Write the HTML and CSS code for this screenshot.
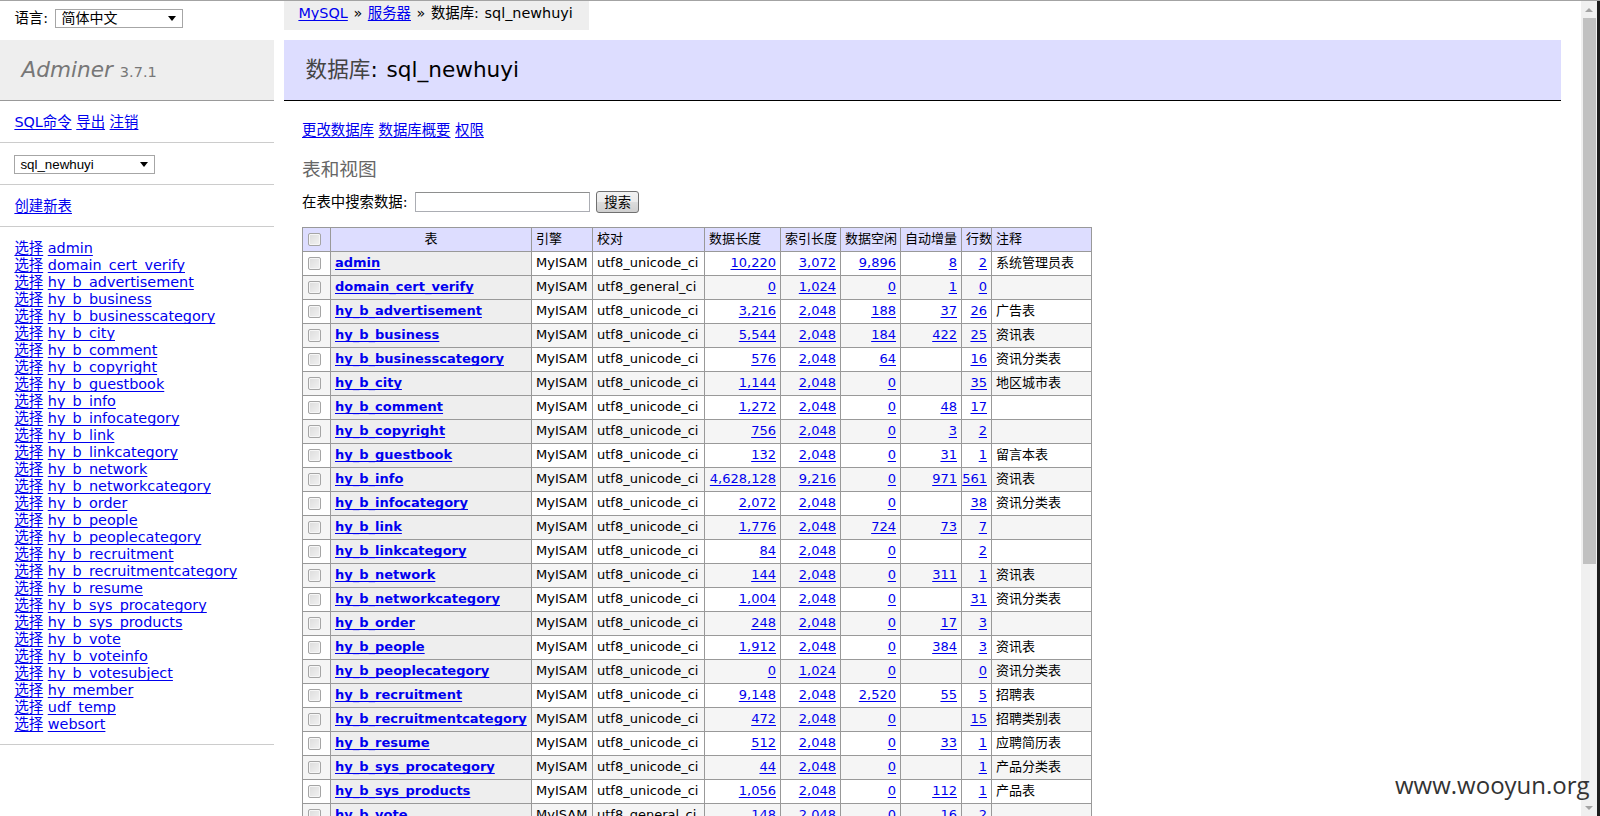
FILE: index.html
```html
<!DOCTYPE html>
<html lang="zh-CN">
<head>
<meta charset="utf-8">
<title>数据库: sql_newhuyi - Adminer</title>
<link rel="stylesheet" href="styles.css">
</head>
<body>
<div class="window">
  <div class="page">
    <aside class="menu">
      <div class="lang">语言: <span class="sel sel-lang"><select><option>简体中文</option></select></span></div>
      <h1 class="logo"><a class="h1" href="#">Adminer</a> <span class="version">3.7.1</span></h1>
      <p class="menu-p fixed"><a href="#">SQL命令</a> <a href="#">导出</a> <a href="#">注销</a></p>
      <p class="menu-p fixed"><span class="sel sel-db"><select><option>sql_newhuyi</option></select></span></p>
      <p class="menu-p fixed"><a href="#">创建新表</a></p>
      <p class="menu-p tables">
        <a href="#">选择</a> <a href="#">admin</a><br>
        <a href="#">选择</a> <a href="#">domain_cert_verify</a><br>
        <a href="#">选择</a> <a href="#">hy_b_advertisement</a><br>
        <a href="#">选择</a> <a href="#">hy_b_business</a><br>
        <a href="#">选择</a> <a href="#">hy_b_businesscategory</a><br>
        <a href="#">选择</a> <a href="#">hy_b_city</a><br>
        <a href="#">选择</a> <a href="#">hy_b_comment</a><br>
        <a href="#">选择</a> <a href="#">hy_b_copyright</a><br>
        <a href="#">选择</a> <a href="#">hy_b_guestbook</a><br>
        <a href="#">选择</a> <a href="#">hy_b_info</a><br>
        <a href="#">选择</a> <a href="#">hy_b_infocategory</a><br>
        <a href="#">选择</a> <a href="#">hy_b_link</a><br>
        <a href="#">选择</a> <a href="#">hy_b_linkcategory</a><br>
        <a href="#">选择</a> <a href="#">hy_b_network</a><br>
        <a href="#">选择</a> <a href="#">hy_b_networkcategory</a><br>
        <a href="#">选择</a> <a href="#">hy_b_order</a><br>
        <a href="#">选择</a> <a href="#">hy_b_people</a><br>
        <a href="#">选择</a> <a href="#">hy_b_peoplecategory</a><br>
        <a href="#">选择</a> <a href="#">hy_b_recruitment</a><br>
        <a href="#">选择</a> <a href="#">hy_b_recruitmentcategory</a><br>
        <a href="#">选择</a> <a href="#">hy_b_resume</a><br>
        <a href="#">选择</a> <a href="#">hy_b_sys_procategory</a><br>
        <a href="#">选择</a> <a href="#">hy_b_sys_products</a><br>
        <a href="#">选择</a> <a href="#">hy_b_vote</a><br>
        <a href="#">选择</a> <a href="#">hy_b_voteinfo</a><br>
        <a href="#">选择</a> <a href="#">hy_b_votesubject</a><br>
        <a href="#">选择</a> <a href="#">hy_member</a><br>
        <a href="#">选择</a> <a href="#">udf_temp</a><br>
        <a href="#">选择</a> <a href="#">websort</a>
      </p>
    </aside>
    <main class="content">
      <div class="breadcrumb"><a href="#">MySQL</a> » <a href="#">服务器</a> » 数据库: sql_newhuyi</div>
      <h2 class="db-title"><span class="cjk">数据库</span>: sql_newhuyi</h2>
      <div class="inner">
        <p class="tabs"><a href="#">更改数据库</a> <a href="#">数据库概要</a> <a href="#">权限</a></p>
        <h3 class="tables-h">表和视图</h3>
        <form class="search">在表中搜索数据: <input class="search-input" type="text"><button class="btn" type="button">搜索</button></form>
        <table class="tbl">
          <colgroup>
            <col class="c-chk"><col class="c-name"><col class="c-eng"><col class="c-coll"><col class="c-data"><col class="c-idx"><col class="c-free"><col class="c-ai"><col class="c-rows"><col class="c-com">
          </colgroup>
          <thead>
            <tr><td><input type="checkbox" class="chk"></td><th class="center">表</th><td>引擎</td><td>校对</td><td>数据长度</td><td>索引长度</td><td>数据空闲</td><td>自动增量</td><td>行数</td><td>注释</td></tr>
          </thead>
          <tbody>
            <tr><td><input type="checkbox" class="chk"></td><th><a href="#">admin</a></th><td>MyISAM</td><td>utf8_unicode_ci</td><td class="num"><a href="#">10,220</a></td><td class="num"><a href="#">3,072</a></td><td class="num"><a href="#">9,896</a></td><td class="num"><a href="#">8</a></td><td class="num"><a href="#">2</a></td><td>系统管理员表</td></tr>
            <tr class="odd"><td><input type="checkbox" class="chk"></td><th><a href="#">domain_cert_verify</a></th><td>MyISAM</td><td>utf8_general_ci</td><td class="num"><a href="#">0</a></td><td class="num"><a href="#">1,024</a></td><td class="num"><a href="#">0</a></td><td class="num"><a href="#">1</a></td><td class="num"><a href="#">0</a></td><td></td></tr>
            <tr><td><input type="checkbox" class="chk"></td><th><a href="#">hy_b_advertisement</a></th><td>MyISAM</td><td>utf8_unicode_ci</td><td class="num"><a href="#">3,216</a></td><td class="num"><a href="#">2,048</a></td><td class="num"><a href="#">188</a></td><td class="num"><a href="#">37</a></td><td class="num"><a href="#">26</a></td><td>广告表</td></tr>
            <tr class="odd"><td><input type="checkbox" class="chk"></td><th><a href="#">hy_b_business</a></th><td>MyISAM</td><td>utf8_unicode_ci</td><td class="num"><a href="#">5,544</a></td><td class="num"><a href="#">2,048</a></td><td class="num"><a href="#">184</a></td><td class="num"><a href="#">422</a></td><td class="num"><a href="#">25</a></td><td>资讯表</td></tr>
            <tr><td><input type="checkbox" class="chk"></td><th><a href="#">hy_b_businesscategory</a></th><td>MyISAM</td><td>utf8_unicode_ci</td><td class="num"><a href="#">576</a></td><td class="num"><a href="#">2,048</a></td><td class="num"><a href="#">64</a></td><td class="num"></td><td class="num"><a href="#">16</a></td><td>资讯分类表</td></tr>
            <tr class="odd"><td><input type="checkbox" class="chk"></td><th><a href="#">hy_b_city</a></th><td>MyISAM</td><td>utf8_unicode_ci</td><td class="num"><a href="#">1,144</a></td><td class="num"><a href="#">2,048</a></td><td class="num"><a href="#">0</a></td><td class="num"></td><td class="num"><a href="#">35</a></td><td>地区城市表</td></tr>
            <tr><td><input type="checkbox" class="chk"></td><th><a href="#">hy_b_comment</a></th><td>MyISAM</td><td>utf8_unicode_ci</td><td class="num"><a href="#">1,272</a></td><td class="num"><a href="#">2,048</a></td><td class="num"><a href="#">0</a></td><td class="num"><a href="#">48</a></td><td class="num"><a href="#">17</a></td><td></td></tr>
            <tr class="odd"><td><input type="checkbox" class="chk"></td><th><a href="#">hy_b_copyright</a></th><td>MyISAM</td><td>utf8_unicode_ci</td><td class="num"><a href="#">756</a></td><td class="num"><a href="#">2,048</a></td><td class="num"><a href="#">0</a></td><td class="num"><a href="#">3</a></td><td class="num"><a href="#">2</a></td><td></td></tr>
            <tr><td><input type="checkbox" class="chk"></td><th><a href="#">hy_b_guestbook</a></th><td>MyISAM</td><td>utf8_unicode_ci</td><td class="num"><a href="#">132</a></td><td class="num"><a href="#">2,048</a></td><td class="num"><a href="#">0</a></td><td class="num"><a href="#">31</a></td><td class="num"><a href="#">1</a></td><td>留言本表</td></tr>
            <tr class="odd"><td><input type="checkbox" class="chk"></td><th><a href="#">hy_b_info</a></th><td>MyISAM</td><td>utf8_unicode_ci</td><td class="num"><a href="#">4,628,128</a></td><td class="num"><a href="#">9,216</a></td><td class="num"><a href="#">0</a></td><td class="num"><a href="#">971</a></td><td class="num"><a href="#">561</a></td><td>资讯表</td></tr>
            <tr><td><input type="checkbox" class="chk"></td><th><a href="#">hy_b_infocategory</a></th><td>MyISAM</td><td>utf8_unicode_ci</td><td class="num"><a href="#">2,072</a></td><td class="num"><a href="#">2,048</a></td><td class="num"><a href="#">0</a></td><td class="num"></td><td class="num"><a href="#">38</a></td><td>资讯分类表</td></tr>
            <tr class="odd"><td><input type="checkbox" class="chk"></td><th><a href="#">hy_b_link</a></th><td>MyISAM</td><td>utf8_unicode_ci</td><td class="num"><a href="#">1,776</a></td><td class="num"><a href="#">2,048</a></td><td class="num"><a href="#">724</a></td><td class="num"><a href="#">73</a></td><td class="num"><a href="#">7</a></td><td></td></tr>
            <tr><td><input type="checkbox" class="chk"></td><th><a href="#">hy_b_linkcategory</a></th><td>MyISAM</td><td>utf8_unicode_ci</td><td class="num"><a href="#">84</a></td><td class="num"><a href="#">2,048</a></td><td class="num"><a href="#">0</a></td><td class="num"></td><td class="num"><a href="#">2</a></td><td></td></tr>
            <tr class="odd"><td><input type="checkbox" class="chk"></td><th><a href="#">hy_b_network</a></th><td>MyISAM</td><td>utf8_unicode_ci</td><td class="num"><a href="#">144</a></td><td class="num"><a href="#">2,048</a></td><td class="num"><a href="#">0</a></td><td class="num"><a href="#">311</a></td><td class="num"><a href="#">1</a></td><td>资讯表</td></tr>
            <tr><td><input type="checkbox" class="chk"></td><th><a href="#">hy_b_networkcategory</a></th><td>MyISAM</td><td>utf8_unicode_ci</td><td class="num"><a href="#">1,004</a></td><td class="num"><a href="#">2,048</a></td><td class="num"><a href="#">0</a></td><td class="num"></td><td class="num"><a href="#">31</a></td><td>资讯分类表</td></tr>
            <tr class="odd"><td><input type="checkbox" class="chk"></td><th><a href="#">hy_b_order</a></th><td>MyISAM</td><td>utf8_unicode_ci</td><td class="num"><a href="#">248</a></td><td class="num"><a href="#">2,048</a></td><td class="num"><a href="#">0</a></td><td class="num"><a href="#">17</a></td><td class="num"><a href="#">3</a></td><td></td></tr>
            <tr><td><input type="checkbox" class="chk"></td><th><a href="#">hy_b_people</a></th><td>MyISAM</td><td>utf8_unicode_ci</td><td class="num"><a href="#">1,912</a></td><td class="num"><a href="#">2,048</a></td><td class="num"><a href="#">0</a></td><td class="num"><a href="#">384</a></td><td class="num"><a href="#">3</a></td><td>资讯表</td></tr>
            <tr class="odd"><td><input type="checkbox" class="chk"></td><th><a href="#">hy_b_peoplecategory</a></th><td>MyISAM</td><td>utf8_unicode_ci</td><td class="num"><a href="#">0</a></td><td class="num"><a href="#">1,024</a></td><td class="num"><a href="#">0</a></td><td class="num"></td><td class="num"><a href="#">0</a></td><td>资讯分类表</td></tr>
            <tr><td><input type="checkbox" class="chk"></td><th><a href="#">hy_b_recruitment</a></th><td>MyISAM</td><td>utf8_unicode_ci</td><td class="num"><a href="#">9,148</a></td><td class="num"><a href="#">2,048</a></td><td class="num"><a href="#">2,520</a></td><td class="num"><a href="#">55</a></td><td class="num"><a href="#">5</a></td><td>招聘表</td></tr>
            <tr class="odd"><td><input type="checkbox" class="chk"></td><th><a href="#">hy_b_recruitmentcategory</a></th><td>MyISAM</td><td>utf8_unicode_ci</td><td class="num"><a href="#">472</a></td><td class="num"><a href="#">2,048</a></td><td class="num"><a href="#">0</a></td><td class="num"></td><td class="num"><a href="#">15</a></td><td>招聘类别表</td></tr>
            <tr><td><input type="checkbox" class="chk"></td><th><a href="#">hy_b_resume</a></th><td>MyISAM</td><td>utf8_unicode_ci</td><td class="num"><a href="#">512</a></td><td class="num"><a href="#">2,048</a></td><td class="num"><a href="#">0</a></td><td class="num"><a href="#">33</a></td><td class="num"><a href="#">1</a></td><td>应聘简历表</td></tr>
            <tr class="odd"><td><input type="checkbox" class="chk"></td><th><a href="#">hy_b_sys_procategory</a></th><td>MyISAM</td><td>utf8_unicode_ci</td><td class="num"><a href="#">44</a></td><td class="num"><a href="#">2,048</a></td><td class="num"><a href="#">0</a></td><td class="num"></td><td class="num"><a href="#">1</a></td><td>产品分类表</td></tr>
            <tr><td><input type="checkbox" class="chk"></td><th><a href="#">hy_b_sys_products</a></th><td>MyISAM</td><td>utf8_unicode_ci</td><td class="num"><a href="#">1,056</a></td><td class="num"><a href="#">2,048</a></td><td class="num"><a href="#">0</a></td><td class="num"><a href="#">112</a></td><td class="num"><a href="#">1</a></td><td>产品表</td></tr>
            <tr class="odd"><td><input type="checkbox" class="chk"></td><th><a href="#">hy_b_vote</a></th><td>MyISAM</td><td>utf8_general_ci</td><td class="num"><a href="#">148</a></td><td class="num"><a href="#">2,048</a></td><td class="num"><a href="#">0</a></td><td class="num"><a href="#">16</a></td><td class="num"><a href="#">2</a></td><td></td></tr>
          </tbody>
        </table>
      </div>
    </main>
  </div>
  <div class="scrollbar">
    <div class="sb-btn"><span class="tri-up"></span></div>
    <div class="sb-thumb"></div>
    <div class="sb-track"></div>
    <div class="sb-btn"><span class="tri-down"></span></div>
  </div>
  <div class="watermark">www.wooyun.org</div>
</div>
</body>
</html>
```

FILE: styles.css
```css
html, body {
  margin: 0;
  padding: 0;
}

body {
  font: 14.4px/18px "DejaVu Sans", "Noto Sans CJK SC", sans-serif;
  color: #000;
  background: #fff;
  overflow: hidden;
}

a {
  color: #0000ee;
  text-decoration-thickness: 1px;
  text-decoration-skip-ink: none;
  text-underline-offset: 0.15em;
}

.window {
  position: relative;
  height: 815px;
  border-top: 1px solid #a3a3a3;
  display: flex;
  overflow: hidden;
}

.page {
  flex: 1;
  min-width: 0;
  display: grid;
  grid-template-columns: 274px 1fr;
  column-gap: 10px;
  align-items: start;
}

/* ---------- sidebar ---------- */
.lang {
  height: 31px;
  padding: 8px 14.4px 0;
  display: flex;
  align-items: flex-start;
  line-height: 19px;
  white-space: pre;
}

.sel {
  position: relative;
  display: inline-block;
  height: 19px;
}

.sel select {
  -webkit-appearance: none;
  appearance: none;
  box-sizing: border-box;
  height: 19px;
  border: 1px solid #a6a6a6;
  border-radius: 0;
  background: #fff;
  color: #000;
  font: 13.33px/17px "Liberation Sans", "Noto Sans CJK SC", sans-serif;
  margin: 0;
  padding: 0 0 0 5px;
}

.sel::after {
  content: "";
  position: absolute;
  right: 7px;
  top: 7px;
  border-left: 4px solid transparent;
  border-right: 4px solid transparent;
  border-top: 5px solid #000;
  pointer-events: none;
}

.sel-lang {
  margin-left: 2px;
}

.sel-lang select {
  width: 128px;
  padding-left: 6px;
  font-size: 14px;
}

.sel-db select {
  width: 141px;
}

.logo {
  margin: 0;
  height: 60px;
  padding: 0 21.6px;
  border-bottom: 1px solid #999;
  background: #eee;
  font-size: 21.6px;
  line-height: 60px;
  font-weight: normal;
  color: #777;
  white-space: nowrap;
}

.logo .h1 {
  color: #777;
  text-decoration: none;
  font-style: italic;
}

.logo .version {
  font-size: 14.5px;
  color: #777;
}

.menu-p {
  margin: 0;
  padding: 11.5px 14.4px 11.5px;
  border-bottom: 1px solid #ccc;
  line-height: 18px;
  white-space: nowrap;
}

.menu-p.fixed {
  height: 18px;
}

.menu-p.fixed .sel {
  vertical-align: top;
}

.menu-p.tables {
  padding: 12.5px 14.4px 11.5px;
  line-height: 17px;
}

/* ---------- content ---------- */
.content {
  min-width: 0;
  padding-right: 20px;
}

.breadcrumb {
  width: max-content;
  height: 29px;
  line-height: 25px;
  padding: 0 16px 0 14.4px;
  background: #eee;
  white-space: nowrap;
  word-spacing: 1px;
}

.db-title {
  margin: 10px 0 0;
  height: 60px;
  line-height: 60px;
  padding: 0 21.6px;
  background: #ddf;
  border-bottom: 1px solid #000;
  font-size: 21.6px;
  font-weight: normal;
  color: #000;
  word-spacing: 2px;
}

.db-title .cjk {
  color: #444;
}

.inner {
  padding-left: 18px;
}

.tabs {
  margin: 20px 0 0;
  line-height: 18px;
}

.tables-h {
  margin: 18.7px 0 0;
  font-size: 18.7px;
  line-height: 23.4px;
  font-weight: normal;
  color: #666;
}

.search {
  margin: 9px 0 0;
  height: 23px;
  display: flex;
  align-items: center;
  white-space: pre;
}

.search-input {
  box-sizing: border-box;
  width: 175px;
  height: 20px;
  margin: 0 0 0 3px;
  border: 1px solid #abadb3;
  border-top-color: #8e8f8f;
  padding: 0 2px;
  font: 13.33px "Liberation Sans", sans-serif;
}

.btn {
  box-sizing: border-box;
  width: 43px;
  height: 22px;
  margin: 0 0 0 6px;
  padding: 0;
  border: 1px solid #707070;
  border-radius: 3px;
  background: linear-gradient(#f2f2f2 0%, #ebebeb 50%, #dddddd 51%, #cfcfcf 100%);
  font: 13.33px/20px "Noto Sans CJK SC", sans-serif;
  color: #000;
}

/* ---------- table ---------- */
.tbl {
  margin-top: 13.5px;
  border-collapse: separate;
  border-spacing: 0;
  table-layout: fixed;
  width: 790px;
  border-top: 1px solid #999;
  border-left: 1px solid #999;
  font-size: 13px;
  line-height: 16px;
}

.c-chk { width: 28px; }
.c-name { width: 201px; }
.c-eng { width: 61px; }
.c-coll { width: 112px; }
.c-data { width: 76px; }
.c-idx { width: 60px; }
.c-free { width: 60px; }
.c-ai { width: 61px; }
.c-rows { width: 30px; }
.c-com { width: 100px; }

.tbl td,
.tbl th {
  height: 23px;
  padding: 0 4px;
  border-right: 1px solid #999;
  border-bottom: 1px solid #999;
  white-space: nowrap;
  overflow: hidden;
  text-align: left;
  vertical-align: middle;
}

.tbl thead td,
.tbl thead th {
  background: #ddf;
  font-weight: normal;
}

.tbl thead th.center {
  text-align: center;
}

.tbl tbody th {
  background: #eee;
  font-weight: bold;
}

.tbl tbody td {
  background: #fff;
}

.tbl tbody tr.odd td {
  background: #f5f5f5;
}

.tbl td.num {
  text-align: right;
  padding: 0 4px 0 0;
}

.chk {
  -webkit-appearance: none;
  appearance: none;
  display: block;
  box-sizing: border-box;
  width: 13px;
  height: 13px;
  margin: 0 0 0 0.5px;
  border: 1px solid #a5a5a5;
  border-radius: 2px;
  background: linear-gradient(135deg, #dcdcdc 0%, #f2f2f2 100%);
  box-shadow: inset 0 0 0 1px #f6f6f6;
}

/* ---------- scrollbar ---------- */
.scrollbar {
  width: 16px;
  flex: none;
  background: #f0f0f0;
  border-right: 3px solid #1c1c1c;
  display: flex;
  flex-direction: column;
  align-items: center;
}

.sb-btn {
  height: 17px;
  display: flex;
  align-items: center;
  justify-content: center;
}

.tri-up {
  border-left: 4px solid transparent;
  border-right: 4px solid transparent;
  border-bottom: 4px solid #a3a3a3;
}

.tri-down {
  border-left: 4px solid transparent;
  border-right: 4px solid transparent;
  border-top: 4px solid #a3a3a3;
}

.sb-thumb {
  width: 13px;
  height: 546px;
  background: #c1c1c1;
}

.sb-track {
  flex: 1;
}

/* ---------- watermark overlay ---------- */
.watermark {
  position: absolute;
  left: 1395px;
  top: 772px;
  font: 24px/24px "Open Sans", sans-serif;
  color: #333;
  white-space: nowrap;
}
```
